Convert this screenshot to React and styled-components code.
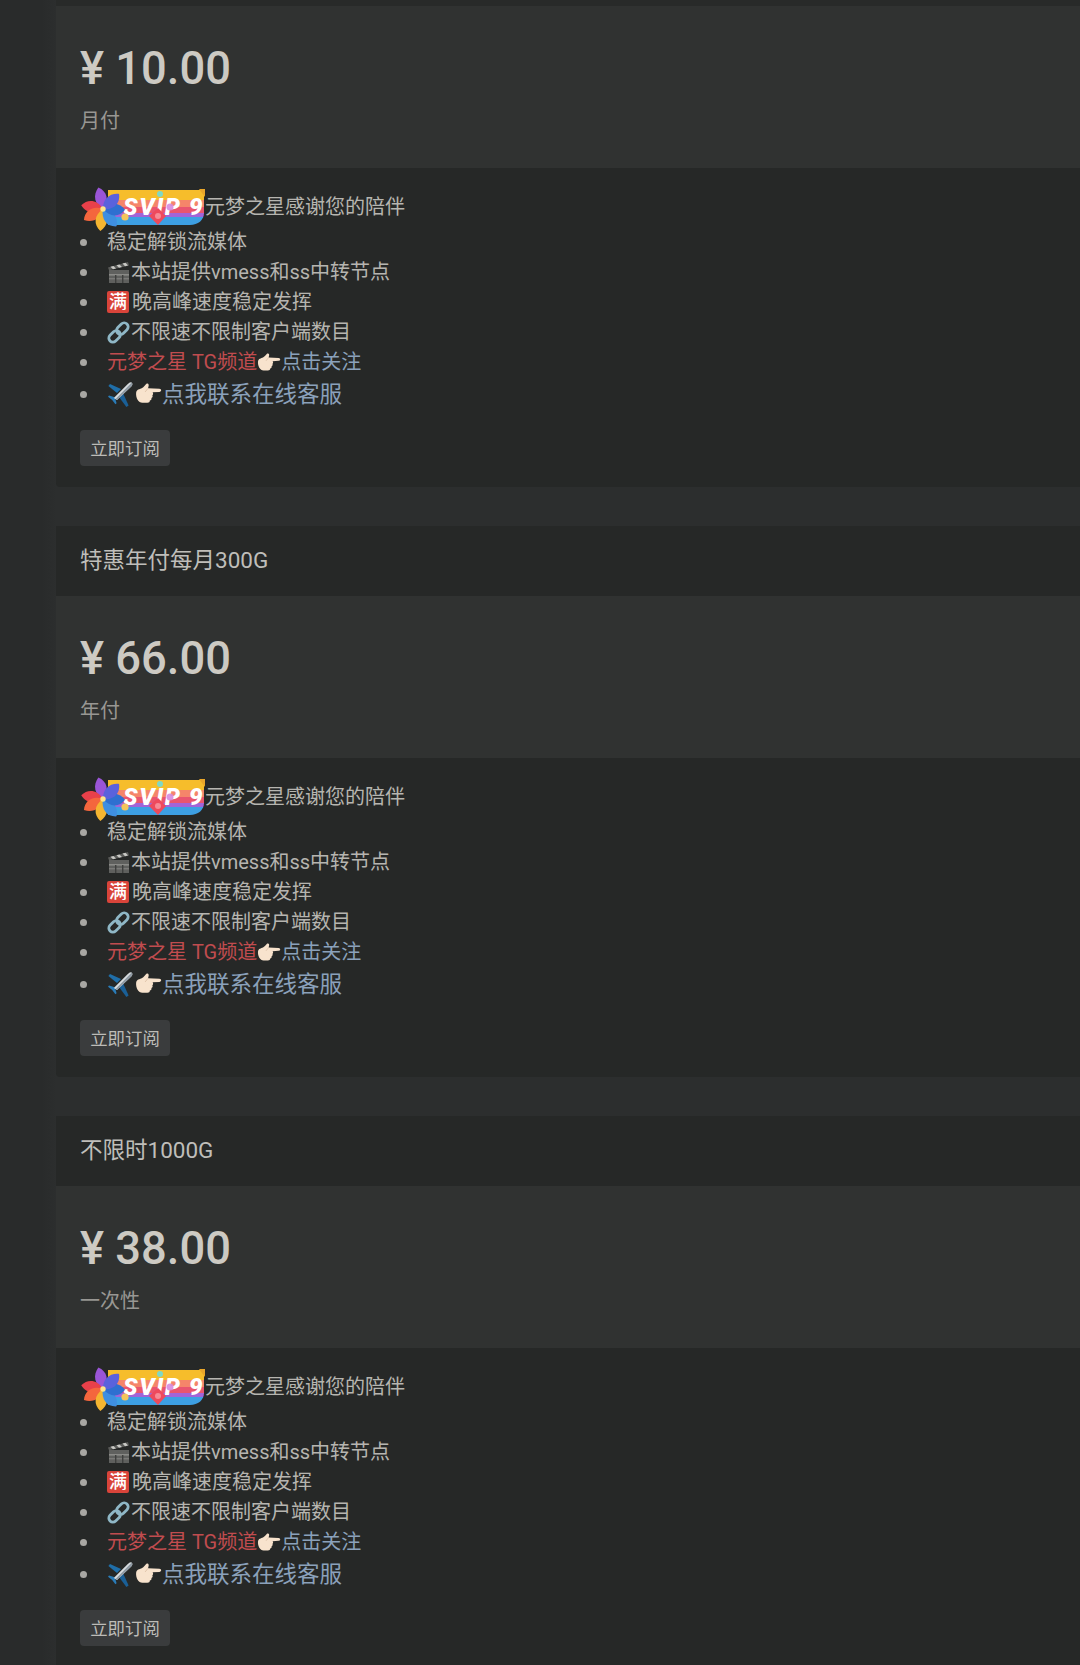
import React from "react";
import styled, { createGlobalStyle } from "styled-components";

const Global = createGlobalStyle`
  html, body { margin: 0; padding: 0; background: #2c2e2e; }
  body { font-family: Roboto, "Noto Sans CJK SC", sans-serif; height: 1665px; overflow: hidden; }
`;

const Shell = styled.div`
  display: flex;
  width: 1080px;
  height: 1665px;
  overflow: hidden;
`;
const Rail = styled.aside`
  flex: 0 0 56px;
  background: linear-gradient(90deg, #292b2b 0, #292b2b 42px, #2c2e2e 56px);
`;
const Main = styled.main`
  flex: 1;
  display: flex;
  flex-direction: column;
  gap: 39px;
  min-width: 0;
`;
const Card = styled.section`
  display: flex;
  flex-direction: column;
  background: #262827;
  border-radius: 4px 0 0 4px;
`;
const ClippedHead = styled.div`
  height: 6px;
  background: #282a29;
`;
const CardHead = styled.h3`
  margin: 0;
  height: 70px;
  box-sizing: border-box;
  padding: 0 24px 6px;
  display: flex;
  align-items: center;
  background: #262827;
  color: #bfbeba;
  font-size: 22.5px;
  font-weight: 400;
`;
const PriceBlock = styled.div`
  height: 162px;
  box-sizing: border-box;
  padding: 29px 24px 0;
  background: #303231;
`;
const Price = styled.div`
  height: 68px;
  line-height: 68px;
  font-size: 45.3px;
  font-weight: 500;
  color: #cdcac3;
`;
const Period = styled.div`
  margin-top: 3px;
  line-height: 30px;
  font-size: 20px;
  color: #989793;
`;
const CardBody = styled.div`
  padding: 18px 24px 21px;
  font-size: 20px;
  color: #b6b5b0;
`;
const Intro = styled.div`
  display: flex;
  align-items: center;
  height: 38px;
  margin: 0 0 3px 2px;
`;
const Features = styled.ul`
  margin: 0;
  padding: 0 0 0 27px;
  list-style: none;
`;
const Feature = styled.li`
  position: relative;
  height: ${(p) => (p.$large ? "34px" : "30px")};
  line-height: ${(p) => (p.$large ? "34px" : "30px")};
  font-size: ${(p) => (p.$large ? "22.5px" : "20px")};
  white-space: nowrap;
  &::before {
    content: "";
    position: absolute;
    left: -27px;
    top: 50%;
    width: 7px;
    height: 7px;
    margin-top: -3.5px;
    border-radius: 50%;
    background: #a8a7a3;
  }
`;
const Row = styled.span`
  display: inline-flex;
  align-items: center;
  vertical-align: top;
  height: 100%;
`;
const Red = styled.span`
  color: #c04c4f;
`;
const Link = styled.a`
  color: #8ba1bb;
  text-decoration: none;
`;
const Subscribe = styled.button`
  display: block;
  margin-top: 19px;
  width: 90px;
  height: 36px;
  padding: 0 0 2px;
  border: 0;
  border-radius: 4px;
  background: #3a3c3d;
  color: #bdbcb8;
  font-family: inherit;
  font-size: 17.4px;
`;
const Full = styled.span`
  flex: none;
  width: 22px;
  height: 22px;
  margin-right: 3px;
  display: inline-flex;
  align-items: center;
  justify-content: center;
  background: #d9443a;
  border-radius: 2px;
  color: #fff;
  font-size: 18px;
  line-height: 22px;
  font-weight: 500;
`;
const Glyph = styled.svg`
  flex: none;
  display: block;
  overflow: visible;
  margin-right: ${(p) => p.$gap ?? 1}px;
`;

const PETAL = "M0 0 C-8 -5 -9 -14 -3 -21 C5 -17 7 -8 0 0 Z";
const petals = [
  [-4, "#9a55d6"],
  [-72, "#e8404a"],
  [-112, "#f4663d"],
  [-165, "#f5b531"],
  [150, "#3f8fe0"],
  [100, "#2f6fd0"],
  [55, "#5a62dc"],
];

const SvipBadge = () => (
  <Glyph width="124" height="38" viewBox="0 -2 124 38" $gap={-1} aria-label="SVIP 9">
    <defs>
      <clipPath id="svipClip">
        <path d="M26 2 H122 V25 C122 32 116 37 108 37 H26 Z" />
      </clipPath>
    </defs>
    <g clipPath="url(#svipClip)">
      <rect x="26" y="2" width="98" height="10" fill="#f6bd2b" />
      <rect x="26" y="12" width="98" height="7" fill="#f5856a" />
      <rect x="26" y="19" width="98" height="7" fill="#e9556f" />
      <rect x="26" y="25" width="98" height="5" fill="#a264d8" />
      <rect x="26" y="29" width="98" height="8" fill="#3d9fe3" />
    </g>
    <path d="M117 1 L123 1 L123 9 Z" fill="#e9a62a" />
    <circle cx="78" cy="6" r="3" fill="#7fd8c4" />
    <text x="41" y="27" fontFamily="Roboto, sans-serif" fontStyle="italic" fontWeight="900" fontSize="24" fill="#fff" letterSpacing="1.6">SVIP 9</text>
    <circle cx="43" cy="29" r="3.6" fill="#f4c55a" />
    <path d="M76 20 L84 28 L76 37 L67 28 Z" fill="#ee4a5c" />
    <circle cx="76" cy="28" r="3" fill="#f68a94" />
    <circle cx="88" cy="19" r="3.5" fill="#d58be0" opacity="0.9" />
    <g transform="translate(21 21) scale(1.04)">
      {petals.map(([angle, fill]) => (
        <path key={angle} d={PETAL} fill={fill} transform={`rotate(${angle})`} />
      ))}
      <circle r="2.6" fill="#ffe58a" />
    </g>
  </Glyph>
);

const Clapper = () => (
  <Glyph width="23" height="23" viewBox="0 0 23 23" $gap={1}>
    <rect x="2" y="9" width="20" height="13" fill="#5f605e" />
    <rect x="2" y="13" width="20" height="1.6" fill="#8a8a87" />
    <rect x="2" y="17" width="20" height="1.4" fill="#7a7a78" />
    <rect x="8" y="14" width="1.4" height="8" fill="#3e3f3e" />
    <rect x="15" y="14" width="1.4" height="8" fill="#3e3f3e" />
    <path d="M1 6.4 L21 1 L22 4.4 L2 9.2 Z" fill="#5a5b59" />
    <path d="M3.5 5.8 L6 8.3 L9 7.5 L6.5 5 Z M9.5 4.2 L12 6.8 L15 6 L12.5 3.4 Z M15.5 2.6 L18 5.2 L21 4.4 L18.5 1.8 Z" fill="#c8c8c4" />
  </Glyph>
);

const Chain = () => (
  <Glyph width="23" height="23" viewBox="0 0 23 23" $gap={1}>
    <g fill="none" stroke="#8fb7c6" strokeWidth="2.8" transform="rotate(-45 11.5 11.5)">
      <rect x="-0.5" y="7.5" width="13" height="8" rx="4" />
      <rect x="10.5" y="7.5" width="13" height="8" rx="4" />
    </g>
  </Glyph>
);

const PointHand = ({ size = 24, gap = 1 }) => (
  <Glyph width={size} height={size * 0.875} viewBox="0 0 24 21" $gap={gap}>
    <path
      d="M1 9.5 C1.5 6.5 4 6.6 6 5.6 C8 4.4 9 2.6 10.2 1.6 C11.8 0.8 12.6 2.4 12 4 L11.6 5.6 L21.6 6 C23.8 6.2 23.8 8.6 21.6 8.8 L15.6 9.2 C16.4 10.2 16.2 11.4 15.4 11.8 C16 12.8 15.6 14 14.6 14.2 C15 15.4 14.2 16.4 13.2 16.4 C13.2 17.6 12.4 18.4 11 18.4 L6.6 18.4 C3 18.4 0.6 14 1 9.5 Z"
      fill="#f8e3cd"
    />
    <path d="M11.6 5.6 L9 8.8" stroke="#dcbfa6" strokeWidth="0.8" fill="none" />
  </Glyph>
);

const Plane = () => (
  <Glyph width="27" height="27" viewBox="0 0 27 27" $gap={1}>
    <path d="M14 8 L3 3 L1.4 5 L10 12 Z" fill="#1f6ea8" />
    <path d="M16 12 L21.6 24.6 L19.4 26 L12 16 Z" fill="#1a5f96" />
    <path d="M7 16 L2 14.6 L1 15.8 L5.2 19 L8.4 23.2 L9.6 22.2 L8.2 17.6 Z" fill="#2a7cb8" />
    <path d="M24.6 1.4 C26 2.6 25.4 4.4 24 5.8 L10 19 L6.8 17 L20.8 3 C22 1.8 23.4 0.6 24.6 1.4 Z" fill="#d8dde0" />
    <path d="M24.6 1.4 C26 2.6 25.4 4.4 24 5.8 L10 19 L8.6 18 L24 2.2 Z" fill="#8f9aa3" />
  </Glyph>
);

const plans = [
  { price: "¥ 10.00", period: "月付" },
  { title: "特惠年付每月300G", price: "¥ 66.00", period: "年付" },
  { title: "不限时1000G", price: "¥ 38.00", period: "一次性" },
];

const Plan = ({ title, price, period }) => (
  <Card>
    {title ? <CardHead>{title}</CardHead> : <ClippedHead />}
    <PriceBlock>
      <Price>{price}</Price>
      <Period>{period}</Period>
    </PriceBlock>
    <CardBody>
      <Intro>
        <SvipBadge />
        元梦之星感谢您的陪伴
      </Intro>
      <Features>
        <Feature>稳定解锁流媒体</Feature>
        <Feature><Row><Clapper />本站提供vmess和ss中转节点</Row></Feature>
        <Feature><Row><Full>满</Full>晚高峰速度稳定发挥</Row></Feature>
        <Feature><Row><Chain />不限速不限制客户端数目</Row></Feature>
        <Feature>
          <Row>
            <Red>元梦之星 TG频道</Red>
            <PointHand size={24} gap={0} />
            <Link>点击关注</Link>
          </Row>
        </Feature>
        <Feature $large>
          <Row>
            <Plane />
            <PointHand size={27} gap={0} />
            <Link>点我联系在线客服</Link>
          </Row>
        </Feature>
      </Features>
      <Subscribe>立即订阅</Subscribe>
    </CardBody>
  </Card>
);

export default function App() {
  return (
    <Shell>
      <Global />
      <Rail />
      <Main>
        {plans.map((p) => (
          <Plan key={p.price} {...p} />
        ))}
      </Main>
    </Shell>
  );
}
